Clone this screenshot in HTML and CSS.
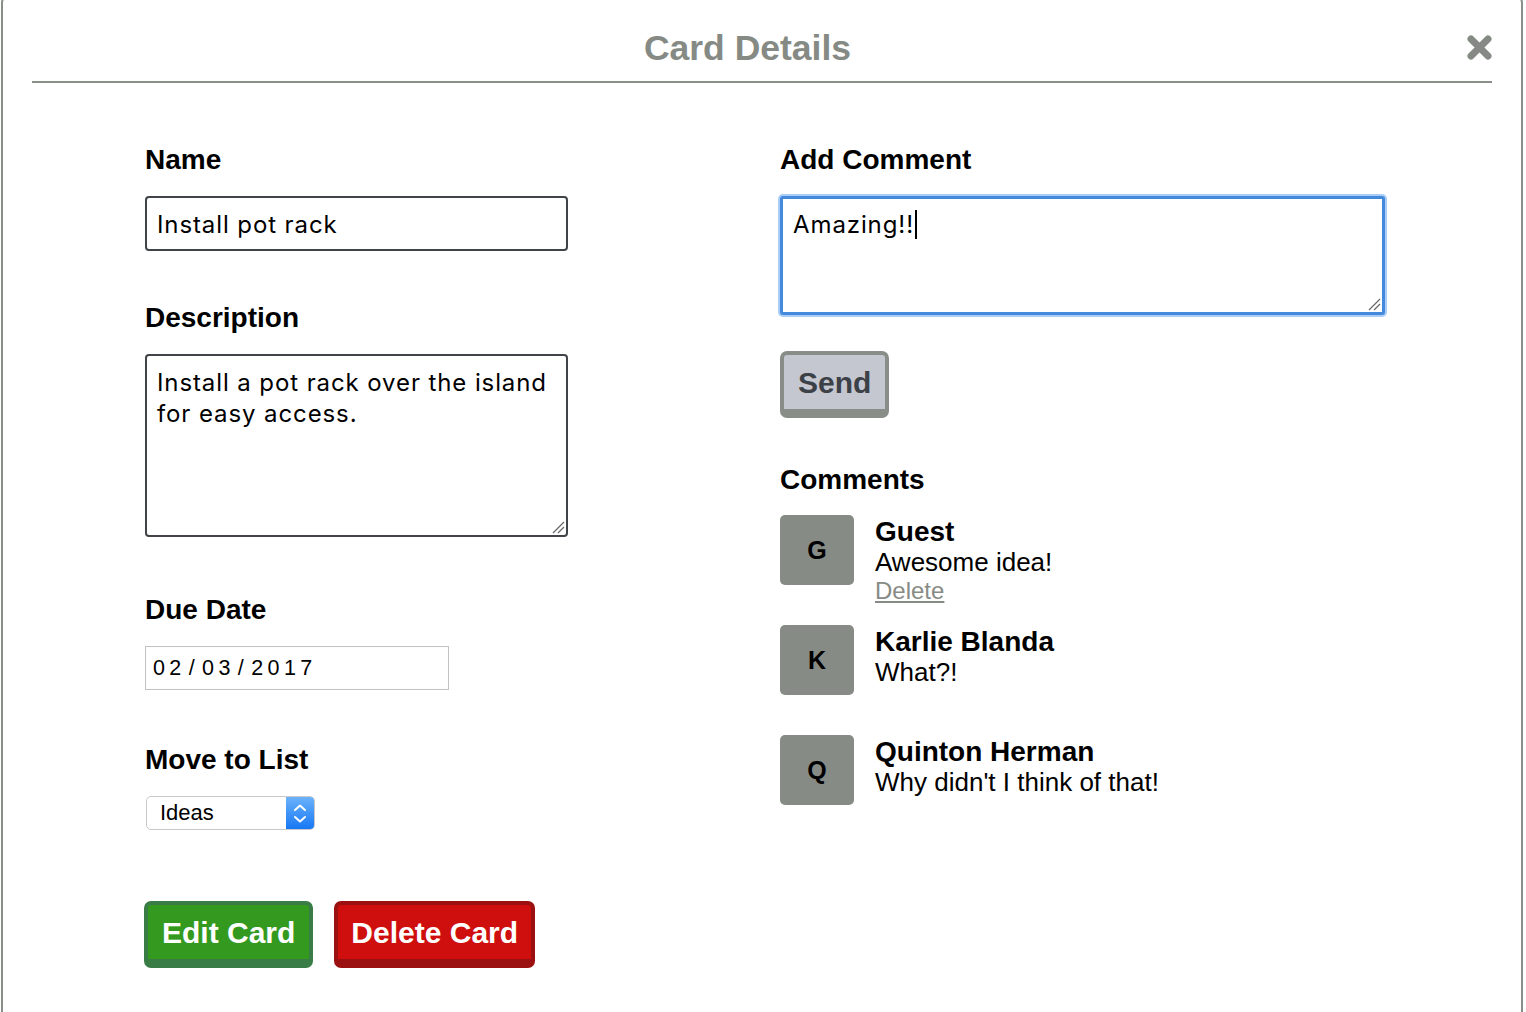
FILE: index.html
```html
<!DOCTYPE html>
<html>
<head>
<meta charset="utf-8">
<link rel="stylesheet" href="styles.css">
</head>
<body>
<div class="modal">
  <div class="header">
    <h1 class="title">Card Details</h1>
    <svg class="close" width="25" height="25" viewBox="0 0 25 25"><path d="M4 4 L21 21 M21 4 L4 21" stroke="#868a84" stroke-width="7" stroke-linecap="round" fill="none"/></svg>
  </div>
  <div class="content">
    <div class="col left">
      <div class="label">Name</div>
      <div class="field name-field">Install pot rack</div>
      <div class="label desc-label">Description</div>
      <div class="field desc-field">Install a pot rack over the island<br>for easy access.<svg class="grip" width="14" height="14" viewBox="0 0 14 14"><path d="M2 13 L13 2 M7 13 L13 7" stroke="#6a6a6a" stroke-width="1.3" fill="none"/></svg></div>
      <div class="label date-label">Due Date</div>
      <div class="date-field">02<span class="sep">/</span>03<span class="sep">/</span>2017</div>
      <div class="label list-label">Move to List</div>
      <div class="select">
        <span class="select-text">Ideas</span>
        <span class="select-arrows">
          <svg width="28" height="32" viewBox="0 0 28 32"><path d="M9 13 L14 8.5 L19 13 M9 20 L14 24.5 L19 20" stroke="#fff" stroke-width="2" fill="none" stroke-linecap="round" stroke-linejoin="round"/></svg>
        </span>
      </div>
      <div class="actions">
        <button class="btn btn-green">Edit Card</button>
        <button class="btn btn-red">Delete Card</button>
      </div>
    </div>
    <div class="col right">
      <div class="label">Add Comment</div>
      <div class="field comment-field">Amazing!!<span class="caret"></span><svg class="grip" width="14" height="14" viewBox="0 0 14 14"><path d="M2 13 L13 2 M7 13 L13 7" stroke="#6a6a6a" stroke-width="1.3" fill="none"/></svg></div>
      <button class="btn btn-gray">Send</button>
      <div class="label comments-label">Comments</div>
      <div class="comments">
        <div class="comment">
          <div class="avatar">G</div>
          <div class="comment-body">
            <div class="comment-name">Guest</div>
            <div class="comment-text">Awesome idea!</div>
            <a class="comment-delete">Delete</a>
          </div>
        </div>
        <div class="comment">
          <div class="avatar">K</div>
          <div class="comment-body">
            <div class="comment-name">Karlie Blanda</div>
            <div class="comment-text">What?!</div>
          </div>
        </div>
        <div class="comment">
          <div class="avatar">Q</div>
          <div class="comment-body">
            <div class="comment-name">Quinton Herman</div>
            <div class="comment-text">Why didn't I think of that!</div>
          </div>
        </div>
      </div>
    </div>
  </div>
</div>
</body>
</html>
```
FILE: styles.css
```css
html, body {
  margin: 0;
  padding: 0;
  background: #fff;
  overflow: hidden;
}
body {
  font-family: "Liberation Sans", Arial, sans-serif;
  color: #000;
}
.modal {
  box-sizing: border-box;
  width: 1522px;
  min-height: 1040px;
  margin: -6px 0 0 1px;
  border: 2px solid #8a8e88;
  border-radius: 9px;
  background: #fff;
}
.header {
  display: flex;
  align-items: center;
  margin: 0 29px 0 29px;
  padding: 31px 0 14px;
  border-bottom: 2px solid #8a8e88;
}
.title {
  flex: 1;
  margin: 0;
  text-align: center;
  font: bold 35.5px/40px "Liberation Sans", Arial, sans-serif;
  color: #868a84;
  position: relative;
  top: 1px;
}
.close {
  display: block;
  margin-left: 4px;
}
.content {
  display: grid;
  grid-template-columns: 635px 635px;
  padding: 61px 0 0 142px;
}
.col {
  display: flex;
  flex-direction: column;
  align-items: flex-start;
}
.label {
  font: bold 28px/32px "Liberation Sans", Arial, sans-serif;
}
.field {
  position: relative;
  box-sizing: border-box;
  border: 2px solid #404347;
  border-radius: 4px;
  background: #fff;
  font-family: Inter, "Noto Sans", sans-serif;
  font-size: 24px;
  line-height: 31px;
  letter-spacing: 0.9px;
  color: #000;
  padding: 11px 10px 0 10px;
}
.grip {
  position: absolute;
  right: 1px;
  bottom: 1px;
}
.name-field {
  margin-top: 20px;
  width: 423px;
  height: 55px;
}
.desc-label {
  margin-top: 51px;
}
.desc-field {
  margin-top: 20px;
  width: 423px;
  height: 183px;
  padding-top: 11px;
}
.date-label {
  margin-top: 57px;
}
.date-field {
  box-sizing: border-box;
  margin-top: 20px;
  width: 304px;
  height: 44px;
  border: 1px solid #c3c3c3;
  padding-left: 7px;
  font-size: 21.5px;
  line-height: 42px;
  letter-spacing: 4.4px;
  color: #000;
}
.sep {
  margin: 0 3px 0 3px;
}
.list-label {
  margin-top: 54px;
}
.select {
  box-sizing: border-box;
  display: flex;
  margin: 20px 0 0 1px;
  width: 169px;
  height: 34px;
  border: 1px solid #c9c9c9;
  border-radius: 5px;
  background: #fff;
  overflow: hidden;
}
.select-text {
  flex: 1;
  padding-left: 13px;
  font-size: 22px;
  line-height: 32px;
}
.select-arrows {
  display: flex;
  width: 28px;
  height: 32px;
  background: linear-gradient(#6bb2fb, #1778f4);
}
.actions {
  display: flex;
  gap: 21px;
  margin-top: 71px;
  margin-left: -1px;
}
.btn {
  box-sizing: border-box;
  display: inline-flex;
  align-items: center;
  height: 67px;
  padding: 1px 14px 0;
  border: 4px solid;
  border-bottom-width: 9px;
  border-radius: 7px;
  font: bold 30px/34px "Liberation Sans", Arial, sans-serif;
  color: #fff;
  cursor: pointer;
}
.btn-green {
  background: #339a1f;
  border-color: #3a7c45;
}
.btn-red {
  background: #cf0e0e;
  border-color: #9b1111;
  padding: 1px 13px 0;
}
.btn-gray {
  margin-top: 36px;
  background: #c4c7cf;
  border-color: #898d87;
  color: #3c4047;
}
.comment-field {
  margin-top: 20px;
  width: 605px;
  height: 119px;
  border: 3px solid #4489dc;
  border-radius: 3px;
  box-shadow: 0 0 0 2px #a9cdf7;
  padding: 10px 10px 0 10px;
}
.caret {
  display: inline-block;
  width: 2px;
  height: 29px;
  margin-left: 1px;
  background: #000;
  vertical-align: -6px;
}
.comments-label {
  margin-top: 46px;
}
.comments {
  margin-top: 19px;
  display: flex;
  flex-direction: column;
  gap: 40px;
}
.comment {
  display: flex;
  gap: 21px;
  height: 70px;
}
.avatar {
  flex: none;
  width: 74px;
  height: 70px;
  border-radius: 5px;
  background: #878b85;
  display: flex;
  align-items: center;
  justify-content: center;
  font: bold 25px "Liberation Sans", Arial, sans-serif;
  color: #000;
}
.comment-body {
  display: flex;
  flex-direction: column;
  padding-top: 2px;
}
.comment-name {
  font: bold 28px/30px "Liberation Sans", Arial, sans-serif;
}
.comment-text {
  font-size: 26px;
  line-height: 30px;
}
.comment-delete {
  font-size: 24px;
  line-height: 27px;
  color: #878b85;
  text-decoration: underline;
  cursor: pointer;
}
```
